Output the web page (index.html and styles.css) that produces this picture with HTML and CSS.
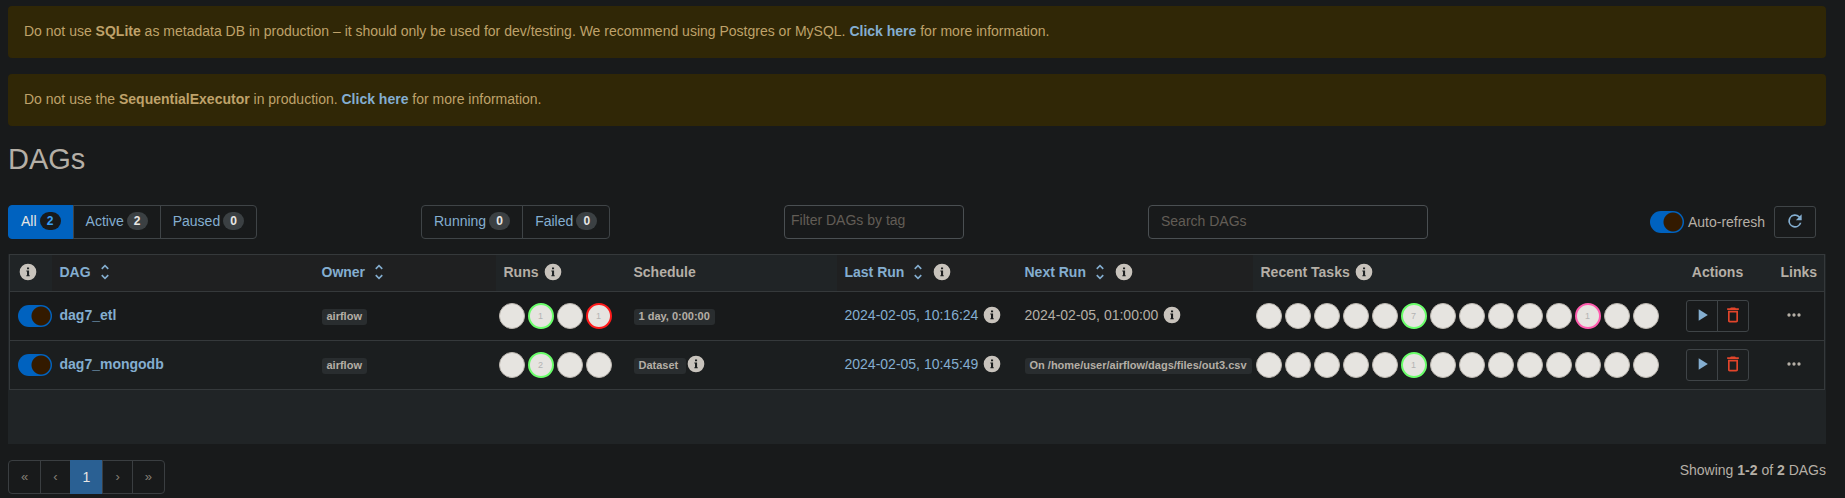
FILE: index.html
```html
<!DOCTYPE html>
<html lang="en">
<head>
<meta charset="utf-8">
<title>DAGs</title>
<link rel="stylesheet" href="styles.css">
</head>
<body>
<svg class="defs" aria-hidden="true">
  <symbol id="info" viewBox="0 0 24 24"><path fill-rule="evenodd" d="M12 2a10 10 0 1 0 0 20 10 10 0 0 0 0-20zM10.800 6.500h2.500v2.300h-2.500zM10 10.200h3.300v5.800h.800v1.200h-4.100v-1.200h.800v-4.600h-.800z"/></symbol>
  <symbol id="sort" viewBox="0 0 24 24"><path d="M12 5.830L15.170 9l1.410-1.410L12 3 7.410 7.590 8.830 9zM12 18.170L8.830 15l-1.410 1.410L12 21l4.590-4.590L15.170 15z"/></symbol>
  <symbol id="refresh" viewBox="0 0 24 24"><path d="M17.650 6.350A8 8 0 1 0 19.730 14h-2.080A6 6 0 1 1 12 6c1.660 0 3.140.690 4.220 1.780L13 11h7V4z"/></symbol>
  <symbol id="play" viewBox="0 0 24 24"><path d="M8 5v14l11-7z"/></symbol>
  <symbol id="trash" viewBox="0 0 24 24"><path d="M6 19c0 1.100.900 2 2 2h8c1.100 0 2-.900 2-2V7H6zM8 9h8v10H8zM15.500 4l-1-1h-5l-1 1H5v2h14V4z"/></symbol>
  <symbol id="dots" viewBox="0 0 24 24"><path d="M6 10a2 2 0 1 0 0 4 2 2 0 0 0 0-4zm6 0a2 2 0 1 0 0 4 2 2 0 0 0 0-4zm6 0a2 2 0 1 0 0 4 2 2 0 0 0 0-4z"/></symbol>
</svg>
<main class="page">
  <div class="alert">Do not use <b>SQLite</b> as metadata DB in production – it should only be used for dev/testing. We recommend using Postgres or MySQL. <a href="#">Click here</a> for more information.</div>
  <div class="alert">Do not use the <b>SequentialExecutor</b> in production. <a href="#">Click here</a> for more information.</div>
  <h1 class="title">DAGs</h1>
  <div class="toolbar">
    <nav class="group">
      <a class="group-item active" href="#">All <span class="badge">2</span></a>
      <a class="group-item" href="#">Active <span class="badge">2</span></a>
      <a class="group-item" href="#">Paused <span class="badge">0</span></a>
    </nav>
    <nav class="group">
      <a class="group-item" href="#">Running <span class="badge">0</span></a>
      <a class="group-item" href="#">Failed <span class="badge">0</span></a>
    </nav>
    <input class="field tags" type="text" placeholder="Filter DAGs by tag" aria-label="Filter DAGs by tag">
    <input class="field search" type="search" placeholder="Search DAGs" aria-label="Search DAGs">
    <div class="refresh">
      <label class="auto"><input class="switch" type="checkbox" checked>Auto-refresh</label>
      <button class="btn refresh-btn" type="button" aria-label="Refresh"><svg class="icon"><use href="#refresh"/></svg></button>
    </div>
  </div>
  <div class="table-wrap">
    <table class="dags">
      <colgroup><col class="c-toggle"><col class="c-dag"><col class="c-owner"><col class="c-runs"><col class="c-schedule"><col class="c-last"><col class="c-next"><col class="c-tasks"><col class="c-actions"><col class="c-links"></colgroup>
      <thead>
        <tr>
          <th><span class="line"><svg class="icon"><use href="#info"/></svg></span></th>
          <th class="sortable"><a class="line" href="#">DAG <svg class="icon"><use href="#sort"/></svg></a></th>
          <th class="sortable"><a class="line" href="#">Owner <svg class="icon"><use href="#sort"/></svg></a></th>
          <th><span class="line">Runs <svg class="icon"><use href="#info"/></svg></span></th>
          <th>Schedule</th>
          <th class="sortable"><span class="line"><a class="line" href="#">Last Run <svg class="icon"><use href="#sort"/></svg></a><svg class="icon"><use href="#info"/></svg></span></th>
          <th class="sortable"><span class="line"><a class="line" href="#">Next Run <svg class="icon"><use href="#sort"/></svg></a><svg class="icon"><use href="#info"/></svg></span></th>
          <th><span class="line">Recent Tasks <svg class="icon"><use href="#info"/></svg></span></th>
          <th class="center">Actions</th>
          <th class="center">Links</th>
        </tr>
      </thead>
      <tbody>
        <tr>
          <td class="mid"><input class="switch" type="checkbox" checked aria-label="Pause dag7_etl"></td>
          <td><a class="name" href="#">dag7_etl</a></td>
          <td class="mid"><a class="chip" href="#">airflow</a></td>
          <td class="dots-cell"><div class="dots"><i class="dot"></i><i class="dot success">1</i><i class="dot"></i><i class="dot failed">1</i></div></td>
          <td class="mid"><a class="chip" href="#">1 day, 0:00:00</a></td>
          <td><span class="line"><a href="#">2024-02-05, 10:16:24</a><svg class="icon"><use href="#info"/></svg></span></td>
          <td><span class="line">2024-02-05, 01:00:00<svg class="icon"><use href="#info"/></svg></span></td>
          <td class="dots-cell"><div class="dots"><i class="dot"></i><i class="dot"></i><i class="dot"></i><i class="dot"></i><i class="dot"></i><i class="dot success">7</i><i class="dot"></i><i class="dot"></i><i class="dot"></i><i class="dot"></i><i class="dot"></i><i class="dot upstream">1</i><i class="dot"></i><i class="dot"></i></div></td>
          <td class="mid"><div class="actions"><button class="btn" type="button" aria-label="Trigger DAG"><svg class="icon"><use href="#play"/></svg></button><button class="btn danger" type="button" aria-label="Delete DAG"><svg class="icon"><use href="#trash"/></svg></button></div></td>
          <td><div class="links"><svg class="icon"><use href="#dots"/></svg></div></td>
        </tr>
        <tr>
          <td class="mid"><input class="switch" type="checkbox" checked aria-label="Pause dag7_mongodb"></td>
          <td><a class="name" href="#">dag7_mongodb</a></td>
          <td class="mid"><a class="chip" href="#">airflow</a></td>
          <td class="dots-cell"><div class="dots"><i class="dot"></i><i class="dot success">2</i><i class="dot"></i><i class="dot"></i></div></td>
          <td><span class="line tight"><a class="chip dataset" href="#">Dataset</a><svg class="icon"><use href="#info"/></svg></span></td>
          <td><span class="line"><a href="#">2024-02-05, 10:45:49</a><svg class="icon"><use href="#info"/></svg></span></td>
          <td class="mid"><a class="chip" href="#">On /home/user/airflow/dags/files/out3.csv</a></td>
          <td class="dots-cell"><div class="dots"><i class="dot"></i><i class="dot"></i><i class="dot"></i><i class="dot"></i><i class="dot"></i><i class="dot success">1</i><i class="dot"></i><i class="dot"></i><i class="dot"></i><i class="dot"></i><i class="dot"></i><i class="dot"></i><i class="dot"></i><i class="dot"></i></div></td>
          <td class="mid"><div class="actions"><button class="btn" type="button" aria-label="Trigger DAG"><svg class="icon"><use href="#play"/></svg></button><button class="btn danger" type="button" aria-label="Delete DAG"><svg class="icon"><use href="#trash"/></svg></button></div></td>
          <td><div class="links"><svg class="icon"><use href="#dots"/></svg></div></td>
        </tr>
      </tbody>
    </table>
  </div>
  <footer class="footer">
    <nav class="pager" aria-label="Pagination">
      <a class="page-link" href="#">«</a><a class="page-link" href="#">‹</a><a class="page-link current" href="#">1</a><a class="page-link" href="#">›</a><a class="page-link" href="#">»</a>
    </nav>
    <div>Showing <b>1-2</b> of <b>2</b> DAGs</div>
  </footer>
</main>
</body>
</html>
```
FILE: styles.css
```css
* { box-sizing: border-box; }
body {
  margin: 0;
  background: #181a1b;
  color: #b5afa6;
  font: 14px/20px "Liberation Sans", Arial, sans-serif;
}
a { color: #84aed0; text-decoration: none; }
.defs { display: none; }
.page { padding: 6px 19px 0 8px; }

.alert {
  margin-bottom: 16px;
  padding: 15px 16px 17px;
  border-radius: 4px;
  background: #302706;
  color: #bfa26a;
}
.alert a { font-weight: bold; }
.title {
  margin: 0 0 29px;
  font-size: 29px;
  line-height: 34px;
  font-weight: normal;
}

.toolbar {
  display: grid;
  grid-template-columns: 413fr 363fr 364fr 668fr;
  align-items: center;
  margin-bottom: 15px;
  padding-right: 10px;
}
.toolbar .search, .toolbar .refresh { grid-row: 1; grid-column: 4; }
.group { display: flex; }
.group-item {
  display: flex;
  align-items: center;
  gap: 3px;
  height: 34px;
  padding: 0 12px 2px;
  border: 1px solid #3f4447;
}
.group-item + .group-item { margin-left: -1px; }
.group-item:first-child { border-radius: 4px 0 0 4px; }
.group-item:last-child { border-radius: 0 4px 4px 0; }
.group-item.active { background: #0062bf; border-color: #0062bf; color: #e8e6e3; }
.badge {
  min-width: 21px;
  padding: 3px 7px;
  border-radius: 10px;
  background: #3b4043;
  color: #e8e6e3;
  font-size: 12px;
  line-height: 12px;
  font-weight: bold;
  text-align: center;
}
.active .badge { background: #181a1b; color: #3ba0f5; }
.field {
  height: 34px;
  border: 1px solid #4a4f52;
  border-radius: 4px;
  background: #181a1b;
  color: #b5afa6;
  font: inherit;
  outline: none;
}
.field::placeholder { color: #625d56; opacity: 1; }
.tags { width: 180px; padding: 0 6px 4px; }
.search { width: 280px; padding: 0 12px 2px; }
.refresh, .auto { display: flex; align-items: center; }
.refresh { justify-self: end; gap: 9px; }
.auto { gap: 4px; }

.switch {
  appearance: none;
  display: block;
  width: 34px;
  height: 22px;
  margin: 0;
  border-radius: 11px;
  background: radial-gradient(circle at 23px 11px, #331a00 9px, #0062bf 10px);
}
.icon { display: block; flex: none; width: 20px; height: 20px; fill: currentColor; }
.btn {
  display: flex;
  align-items: center;
  justify-content: center;
  height: 32px;
  width: 32px;
  padding: 0 0 2px;
  border: 1px solid #3f4447;
  border-radius: 3px;
  background: transparent;
  color: #84aed0;
}
.refresh-btn { width: 42px; }

.table-wrap { min-height: 190px; padding: 0 1px; background: #202426; }
.dags {
  width: 100%;
  table-layout: fixed;
  border-collapse: collapse;
  border: 1px solid #35393b;
}
.dags tr { border-bottom: 1px solid #35393b; }
.dags th { height: 37px; padding: 0 8px 2px; text-align: left; }
.dags td { height: 49px; padding: 0 8px 2px; white-space: nowrap; }
.dags .mid { padding-bottom: 0; }
.dags .sortable { background: #1f2021; }
.dags .center { text-align: center; }
.dags tbody tr { background: #181a1b; }
.dags tbody tr:nth-child(even) { background: #1b1e1f; }
.c-toggle { width: 42px; }
.c-owner { width: 182px; }
.c-runs { width: 130px; }
.c-schedule { width: 211px; }
.c-last { width: 180px; }
.c-next { width: 236px; }
.c-tasks { width: 410px; }
.c-actions { width: 110px; }
.c-links { width: 52px; }
.line { display: flex; align-items: center; gap: 4px; }
.line .icon { color: #c8c3bc; }
a.line .icon { color: #84aed0; }
.tight { gap: 0; align-items: flex-end; }
.name { font-weight: bold; }
.chip {
  display: inline-block;
  vertical-align: middle;
  padding: 0 5px 2px;
  border-radius: 3px;
  background: #292d2f;
  color: #b5afa6;
  font-size: 11px;
  line-height: 14px;
  font-weight: bold;
}
.dataset { padding-right: 8px; }
.dags .dots-cell { padding: 0 3px; }
.dots { display: flex; gap: 3px; }
.dot {
  width: 26px;
  height: 26px;
  border: 1px solid #bdb8b1;
  border-radius: 50%;
  background: #e6e4e0;
  color: #b3b3b3;
  font-size: 9px;
  line-height: 24px;
  font-style: normal;
  text-align: center;
}
.success, .failed, .upstream { border-width: 2px; line-height: 22px; }
.success { border-color: #6aff6a; }
.failed { border-color: #ff1a1a; }
.upstream { border-color: #ff5cae; }
.actions { display: flex; justify-content: center; }
.actions .btn:first-child { border-radius: 3px 0 0 3px; }
.actions .btn:last-child { margin-left: -1px; border-radius: 0 3px 3px 0; }
.actions .danger { color: #e2452b; }
.links { display: flex; justify-content: center; padding-right: 8px; }

.footer { display: flex; justify-content: space-between; margin-top: 16px; }
.pager { display: flex; }
.page-link {
  padding: 6px 12px;
  border: 1px solid #3a3e41;
  color: #857f76;
  font-size: 13px;
}
.page-link + .page-link { margin-left: -1px; }
.page-link:first-child { border-radius: 4px 0 0 4px; }
.page-link:last-child { border-radius: 0 4px 4px 0; }
.page-link.current { background: #2a6093; border-color: #2a6093; color: #e8e6e3; font-size: 14px; }
```
